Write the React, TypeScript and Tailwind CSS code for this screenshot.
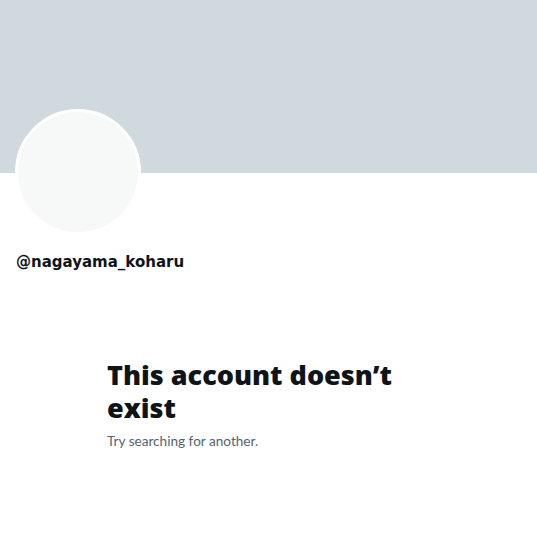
export default function App() {
  return (
    <div
      className="min-h-[544px] w-full bg-white"
      style={{ fontFamily: '"Open Sans", "Noto Sans", sans-serif' }}
    >
      <div className="h-[173px] bg-[#cfd9de]" />
      <div className="px-[15px]">
        <div className="-mt-[64px] h-[126px] w-[126px] rounded-full border-[3px] border-white bg-[#f7f9f9]" />
        <div className="mt-[17px] pl-px font-['DejaVu_Sans',sans-serif] text-[15px] font-bold leading-5 text-[#0f1419]">
          @nagayama_koharu
        </div>
      </div>
      <div className="mt-[86px] pl-[107px] pr-[100px]">
        <h1 className="text-[27px] font-extrabold leading-[33px] text-[#0f1419]">
          This account doesn’t exist
        </h1>
        <p className="mt-[9px] font-['Lato',sans-serif] text-[13.6px] leading-4 text-[#536471]">
          Try searching for another.
        </p>
      </div>
    </div>
  );
}
